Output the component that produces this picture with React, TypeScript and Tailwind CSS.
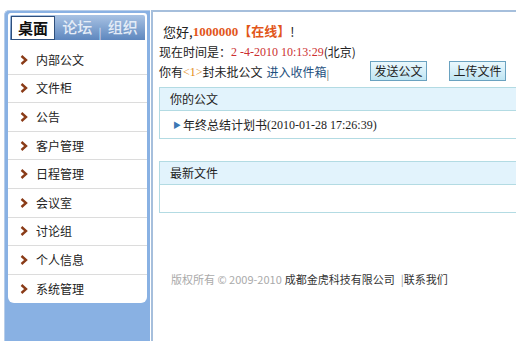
const menu = ["内部公文", "文件柜", "公告", "客户管理", "日程管理", "会议室", "讨论组", "个人信息", "系统管理"];

const Chevron = () => (
  <svg width="8" height="10" viewBox="0 0 8 10" className="shrink-0">
    <path d="M1.5 1 L6 5 L1.5 9" fill="none" stroke="#8a3b17" strokeWidth="2.4" strokeLinejoin="miter" />
  </svg>
);

const Sidebar = () => {
  return (
    <aside className="ml-[4px] w-[146px] h-[331px] shrink-0 bg-[#89b1e3] rounded-tl-[5px] border-l border-t border-[#b7cde9] pt-[2px] px-[3px]">
      <div className="bg-white rounded-b-[6px] rounded-t-[3px] pt-[2px]">
        <div className="mx-[2px] h-[25px] flex items-stretch bg-gradient-to-b from-[#a9c3e4] to-[#5e87be] rounded-t-[2px] text-[15px]">
          <div className="w-[44px] ml-[1px] mt-[1px] bg-white border border-[#2e4f7c] flex items-center justify-center text-[#111] font-bold">
            桌面
          </div>
          <div className="flex-1 flex items-center justify-around text-[#e4ecf7] font-medium px-[4px]">
            <span>论坛</span>
            <span className="text-[11px] font-normal mt-[10px] text-[#dce7f5]">|</span>
            <span>组织</span>
          </div>
        </div>
        <ul className="pt-[6px]">
          {menu.map((m, i) => (
            <li
              key={m}
              className={
                "h-[28.6px] flex items-center gap-[8px] pl-[12px] text-[12px] text-[#222] " +
                (i < menu.length - 1 ? "border-b border-[#dcdcdc]" : "")
              }
            >
              <Chevron />
              <span>{m}</span>
            </li>
          ))}
        </ul>
      </div>
    </aside>
  );
};

const Box = ({ title, children }: { title: string; children?: React.ReactNode }) => (
  <div className="ml-[6px] border-l border-y border-[#b3dbe3]">
    <div className="h-[23px] bg-[#e2f3fc] border-b border-[#b3dbe3] flex items-center pl-[10px] text-[12px] text-[#222]">
      {title}
    </div>
    <div className="h-[27px] bg-white flex items-center pl-[13px] text-[12px] text-[#222]">{children}</div>
  </div>
);

const Btn = ({ label }: { label: string }) => (
  <button className="w-[57px] h-[20px] border border-[#6aa2c0] bg-gradient-to-b from-[#eaf8fd] to-[#bfe5f3] text-[12px] text-[#222] leading-none">
    {label}
  </button>
);

export default function App() {
  return (
    <div
      className="w-[516px] h-[341px] bg-white flex pt-[10px] overflow-hidden"
      style={{ fontFamily: '"Noto Sans CJK SC", "Liberation Sans", sans-serif' }}
    >
      <Sidebar />
      <main className="flex-1 ml-[1px] border-l-2 border-t-2 border-[#a6bfdc] pt-[10px] pr-[9px] text-[12px] text-[#222]">
        <div className="pl-[10px] h-[20px] flex items-center text-[13px]">
          您好,
          <span className="font-bold text-[#e2561a]" style={{ fontFamily: '"Liberation Serif", "Noto Sans CJK SC", serif' }}>
            1000000【在线】
          </span>
          !
        </div>
        <div className="pl-[6px] h-[20px] flex items-center">
          现在时间是：
          <span className="text-[#cc2f2f]" style={{ fontFamily: '"Liberation Serif", serif' }}>
            2 -4-2010 10:13:29
          </span>
          (北京)
        </div>
        <div className="pl-[6px] h-[20px] flex items-center">
          <span>你有</span>
          <span className="text-[#e38b12]" style={{ fontFamily: '"Liberation Serif", serif' }}>
            &lt;1&gt;
          </span>
          <span>封未批公文</span>
          <span className="text-[#1d4f7e] ml-[4px]">进入收件箱</span>
          <span className="text-[#666] text-[10px] mt-[3px]">|</span>
          <div className="ml-auto flex gap-[22px] -mt-[2px] mr-[1px]">
            <Btn label="发送公文" />
            <Btn label="上传文件" />
          </div>
        </div>
        <div className="mt-[5px] -mr-[9px]">
          <Box title="你的公文">
            <span className="text-[#3c78b4] text-[8px] mr-[2px]">▶</span>
            <span>年终总结计划书</span>
            <span style={{ fontFamily: '"Liberation Serif", serif' }}>(2010-01-28 17:26:39)</span>
          </Box>
        </div>
        <div className="mt-[22px] -mr-[9px]">
          <Box title="最新文件" />
        </div>
        <div className="mt-[58px] pl-[18px] text-[11px] flex items-center">
          <span className="text-[#aaa]">版权所有 © 2009-2010</span>
          <span className="ml-[3px] text-[#333]">成都金虎科技有限公司</span>
          <span className="ml-[6px] text-[#999]">|</span>
          <span className="text-[#333]">联系我们</span>
        </div>
      </main>
    </div>
  );
}
